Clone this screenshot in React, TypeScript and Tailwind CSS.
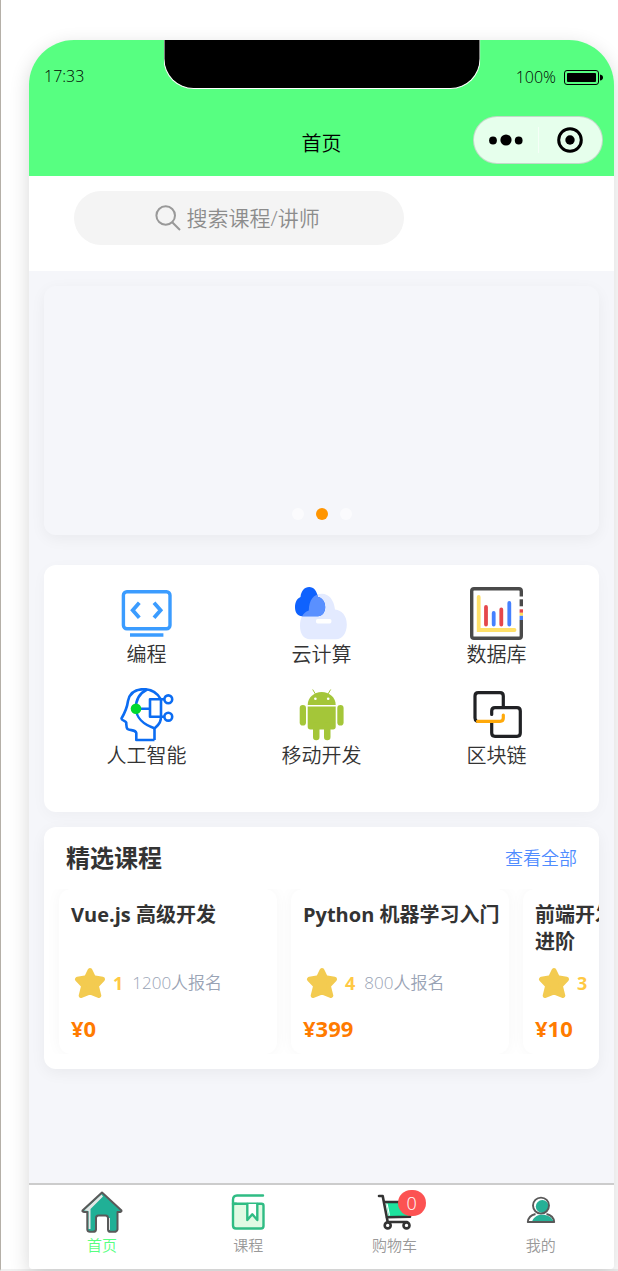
import type { ReactNode } from 'react'

const categories = [
  { label: '编程', icon: <CodeIcon /> },
  { label: '云计算', icon: <CloudIcon /> },
  { label: '数据库', icon: <DatabaseIcon /> },
  { label: '人工智能', icon: <BrainIcon /> },
  { label: '移动开发', icon: <AndroidIcon /> },
  { label: '区块链', icon: <ChainIcon /> },
]

const courses = [
  { title: 'Vue.js 高级开发', rating: 1, students: '1200人报名', price: 0 },
  { title: 'Python 机器学习入门', rating: 4, students: '800人报名', price: 399 },
  { title: '前端开发\n进阶', rating: 3, students: '', price: 10 },
]

const tabs = [
  { label: '首页', icon: <HomeIcon />, active: true, badge: null },
  { label: '课程', icon: <BookIcon />, active: false, badge: null },
  { label: '购物车', icon: <CartIcon />, active: false, badge: 0 },
  { label: '我的', icon: <UserIcon />, active: false, badge: null },
]

function CategorySvg({ children }: { children: ReactNode }) {
  return (
    <svg viewBox="0 0 54 54" className="w-[54px] h-[54px]" fill="none" aria-hidden="true">
      {children}
    </svg>
  )
}

function TabSvg({ children }: { children: ReactNode }) {
  return (
    <svg viewBox="0 0 42 42" className="w-[42px] h-[42px]" fill="none" aria-hidden="true">
      {children}
    </svg>
  )
}

function CodeIcon() {
  return (
    <CategorySvg>
      <g stroke="#3b9cff" strokeWidth="3.4">
        <rect x="3.4" y="4.7" width="46.6" height="37" rx="3.5" />
        <path d="M19.3 15.800l-6.6 7.500 6.6 7.500M34 15.800l6.6 7.500-6.6 7.500" strokeWidth="3.8" />
        <path d="M10 48h33.4" />
      </g>
    </CategorySvg>
  )
}

function CloudIcon() {
  const small =
    'M7 29.2C2.800 29.2 0 25.500 0 20.500C0 15 2 11.500 5.500 10C6 4 9.500 0 14.200 0S22 4 22.800 10C27 10.500 30.200 14.500 30.200 20C30.200 25.500 27 29.200 23 29.200Z'
  const big =
    'M15 52.300C9 52.300 5 47 5 39C5 31 8 25.500 13.800 23.500C14 13 18.500 6.700 27 6.700C34 6.700 39 13 40 22.600C47 23.500 51.800 29 51.800 37.500C51.800 46.500 47 52.300 41 52.300Z'
  return (
    <CategorySvg>
      <clipPath id="cloud-small">
        <path d={small} />
      </clipPath>
      <path d={big} fill="#e3eaff" />
      <path d={small} fill="#0f62fe" />
      <path d={big} fill="#5a90ff" clipPath="url(#cloud-small)" />
      <rect x="21" y="32" width="15.400" height="4.400" rx="1.600" fill="#fff" />
    </CategorySvg>
  )
}

function DatabaseIcon() {
  return (
    <CategorySvg>
      <path d="M51.300 9.500V4Q51.300 1.700 49 1.700H4Q1.700 1.700 1.700 4V49Q1.700 51.300 4 51.300H49Q51.300 51.300 51.300 49V33" stroke="#4a4a4a" strokeWidth="3.400" />
      <path d="M51.300 12.300v7" stroke="#4a4a4a" strokeWidth="3.400" />
      <path d="M51.300 22.300v3.500" stroke="#e5474b" strokeWidth="3.400" />
      <path d="M51.300 25.800v3" stroke="#ffdf5e" strokeWidth="3.400" />
      <path d="M51.300 28.800v4.200" stroke="#4581ff" strokeWidth="3.400" />
      <g strokeWidth="3.800" strokeLinecap="round">
        <path d="M8.700 10v33H44.500" stroke="#ffe069" />
        <path d="M16 20v17.500M31.300 22.500v15" stroke="#e5474b" />
        <path d="M23.700 26v11.500M39.300 16v21.500" stroke="#4581ff" />
      </g>
    </CategorySvg>
  )
}

function BrainIcon() {
  return (
    <CategorySvg>
      <g stroke="#0b6cf2" strokeWidth="2.600" strokeLinejoin="round">
        <path d="M34.500 52V40.500C40 36 41 33 41 28V11.500C37 4 31 1.200 23.500 1.200C14 1.200 9.500 6 8 13C7.200 19 5 24.500 1.500 30.500C1.300 32.500 5.500 32.500 6.200 34.500C6.500 37 6 39 7.500 41C10 43 15.500 41 16.300 45V52H34.500" />
        <path d="M27 1.500C19 5.500 15.800 12 15.800 20.500C16.500 30 22 36 35 40.500" />
        <path d="M16 20.700H30M44.300 11.300H30V28.700H44.300" />
        <circle cx="48.300" cy="11.300" r="3.900" />
        <circle cx="48.300" cy="28.700" r="3.900" />
      </g>
      <circle cx="16" cy="20.700" r="5.300" fill="#00d92f" />
    </CategorySvg>
  )
}

function AndroidIcon() {
  return (
    <CategorySvg>
      <g fill="#a4c639">
        <path d="M12.700 17C12.700 9.500 19 4 26.700 4S40.700 9.500 40.700 17Z" />
        <path d="M12.700 18.500h28v20.300q0 2.700-2.700 2.700H15.400q-2.700 0-2.700-2.700Z" />
        <rect x="4.700" y="17" width="6.300" height="20.500" rx="3.100" />
        <rect x="42.300" y="17" width="6.300" height="20.500" rx="3.100" />
        <rect x="18" y="34" width="6.500" height="18.300" rx="3.200" />
        <rect x="29" y="34" width="6.500" height="18.300" rx="3.200" />
      </g>
      <path d="M17.700 1.500l3 5M35.700 1.500l-3 5" stroke="#a4c639" />
      <circle cx="20.400" cy="10.700" r="1.300" fill="#fff" />
      <circle cx="33.200" cy="10.700" r="1.300" fill="#fff" />
    </CategorySvg>
  )
}

function ChainIcon() {
  return (
    <CategorySvg>
      <g stroke="#202124" strokeWidth="3.200" strokeLinecap="round">
        <path d="M33.300 18.500V8Q33.300 4.700 30 4.700H8.300Q5 4.700 5 8V30Q5 32 6.500 33" />
        <path d="M21.700 26.500V23Q21.700 19.700 25 19.700H47Q50.300 19.700 50.300 23V45Q50.300 48.300 47 48.300H25Q21.700 48.300 21.700 45V35" />
      </g>
      <path d="M7.500 33.300H30Q33.300 33.300 33.300 30V27" stroke="#ffa90a" strokeWidth="3.200" strokeLinecap="round" />
    </CategorySvg>
  )
}

function HomeIcon() {
  return (
    <TabSvg>
      <path d="M21 2.500L40.500 19.500Q41 21.500 36.500 21V38.500Q36 40.800 33 40.800H29.500Q27.300 40.800 27 38.500V27Q27 24.500 24.500 24.500H17.500Q15 24.500 15 27V38.500Q14.700 40.800 12 40.800H9Q6.500 40.800 6.300 38.500V21Q.700 21.500 1.500 19.500Z" fill="#20b096" />
      <path d="M3 19.500L20.500 3.500L22 5.500L9.500 18V38H7.500V20Z" fill="#e4e7e6" />
      <path d="M28.500 27v12" stroke="#e4e7e6" />
      <path d="M21 1.500L40.500 19.500Q41 21.500 36.500 21V38.500Q36 40.800 33 40.800H29.500Q27.300 40.800 27 38.500V27Q27 24.500 24.500 24.500H17.500Q15 24.500 15 27V38.500Q14.700 40.800 12 40.800H9Q6.500 40.800 6.300 38.500V21Q.700 21.500 1.500 19.500Z" stroke="#595959" strokeWidth="2" strokeLinejoin="round" />
    </TabSvg>
  )
}

function BookIcon() {
  return (
    <TabSvg>
      <g stroke="#2fbc84" strokeWidth="2.400" strokeLinecap="round" strokeLinejoin="round">
        <path d="M6 12.700H34.500Q36.500 12.700 36.500 14.700V35Q36.500 37.500 34 37.500H9Q6 37.500 6 34.500Z" fill="#e0fae3" />
        <path d="M36 4.500H10Q6 4.500 6 9V13Q7 12.700 9 12.700" />
        <path d="M20.300 13V29L25.300 23.300L30.300 29V13" fill="#fff" />
      </g>
    </TabSvg>
  )
}

function CartIcon() {
  return (
    <TabSvg>
      <path d="M12 11H35.500V25.500H14.500Z" fill="#1de29d" />
      <path d="M13 12.500l2.500 12" stroke="#fff" strokeWidth="1.200" />
      <g stroke="#333" strokeWidth="2.600" strokeLinecap="round" strokeLinejoin="round">
        <path d="M5 5H8.700L13.700 31H33" />
        <path d="M10.500 11H36V25.700L13 26.200" />
        <circle cx="13.700" cy="34.400" r="3" fill="#fff" />
        <circle cx="32.500" cy="34.400" r="3" fill="#fff" />
      </g>
    </TabSvg>
  )
}

function UserIcon() {
  return (
    <TabSvg>
      <circle cx="22.300" cy="15.500" r="6.500" fill="#26b096" />
      <path d="M12 30.500C14 25.500 18 23.800 22 23.800C28 23.800 31.500 26 33.500 30.500Z" fill="#26b096" />
      <g stroke="#595959" strokeWidth="1.900" strokeLinejoin="round">
        <circle cx="21" cy="14.600" r="8" />
        <path d="M15.500 23Q8.500 24.500 7.800 31H34.200Q33.500 24.500 26.500 23" />
      </g>
    </TabSvg>
  )
}

function StarIcon() {
  return (
    <svg viewBox="0 0 32 32" className="w-8 h-8" aria-hidden="true">
      <path
        d="M16 3.500L19.500 10.800L28.500 12.200L22.300 18.700L24.800 28.500L16 25L7.200 28.500L9.700 18.700L3.500 12.200L12.500 10.800Z"
        fill="#f3cb50"
        stroke="#f3cb50"
        strokeWidth="5"
        strokeLinejoin="round"
      />
    </svg>
  )
}

function Header() {
  return (
    <header className="relative bg-[#57ff81] rounded-t-[45px] text-black">
      <div className="absolute top-0 left-1/2 -translate-x-1/2 w-[317px] h-[49px] bg-black border border-t-0 border-white rounded-b-[30px]" />
      <div className="h-[72px] pl-[15px] pr-[11px] flex items-center justify-between text-base">
        <span>17:33</span>
        <div className="flex items-center gap-2 pt-[2px]">
          <span>100%</span>
          <svg width="39" height="15" viewBox="0 0 39 15" aria-hidden="true">
            <rect x=".5" y=".5" width="34" height="14" rx="2.500" fill="none" stroke="#000" />
            <rect x="3" y="3" width="29" height="9" rx="1" />
            <path d="M36 4.500q3 .5 3 3t-3 3Z" />
          </svg>
        </div>
      </div>
      <div className="h-16 px-[11px] grid grid-cols-[1fr_auto_1fr] items-center">
        <h1 className="col-start-2 text-xl">首页</h1>
        <div className="self-start justify-self-end mt-1 w-[130px] h-12 flex items-center rounded-full border border-black/15 bg-white/85">
          <button type="button" aria-label="更多" className="flex-1 flex justify-center">
            <svg width="34" height="12" viewBox="0 0 34 12">
              <circle cx="4" cy="6.500" r="3.900" />
              <circle cx="17" cy="6" r="5.600" />
              <circle cx="29.700" cy="6.500" r="3.900" />
            </svg>
          </button>
          <span className="w-px h-[26px] bg-white/60" />
          <button type="button" aria-label="关闭" className="flex-1 flex justify-center">
            <svg width="26" height="26" viewBox="0 0 26 26">
              <circle cx="13" cy="13" r="11.300" fill="none" stroke="#000" strokeWidth="3" />
              <circle cx="13" cy="13" r="4.700" />
            </svg>
          </button>
        </div>
      </div>
    </header>
  )
}

function SearchBar() {
  return (
    <div className="bg-white pt-[15px] pb-[26px] pl-[45px] pr-[210px]">
      <label className="h-[54px] flex items-center justify-center gap-[6px] rounded-full bg-[#f4f4f4] text-[#999]">
        <svg width="26" height="26" viewBox="0 0 26 26" fill="none" stroke="currentColor" strokeWidth="2" aria-hidden="true">
          <circle cx="10.700" cy="10.500" r="9.300" />
          <path d="M17.200 17.200L25 25" />
        </svg>
        <input
          type="text"
          aria-label="搜索课程/讲师"
          placeholder="搜索课程/讲师"
          className="w-[137px] text-[21px] leading-[30px] bg-transparent outline-none placeholder:text-[#8c8c8c]"
        />
      </label>
    </div>
  )
}

function Banner() {
  return (
    <section className="h-[249px] rounded-xl shadow-[0_4px_15px_rgba(0,0,0,0.05)] flex items-end justify-center gap-3 pb-[15px]">
      <span className="size-3 rounded-full bg-white/60" />
      <span className="size-3 rounded-full bg-[#ff9500]" />
      <span className="size-3 rounded-full bg-white/60" />
    </section>
  )
}

function Categories() {
  return (
    <nav className="mt-[30px] px-[15px] pt-[22px] pb-[42px] grid grid-cols-3 gap-y-[19px] bg-white rounded-xl shadow-[0_4px_15px_rgba(0,0,0,0.03)]">
      {categories.map((c) => (
        <a key={c.label} href="#" className="flex flex-col items-center text-xl leading-7 text-[#333]">
          {c.icon}
          {c.label}
        </a>
      ))}
    </nav>
  )
}

function Courses() {
  return (
    <section className="mt-[15px] pb-[15px] bg-white rounded-xl shadow-[0_4px_15px_rgba(0,0,0,0.05)] overflow-hidden">
      <div className="h-[62px] px-[22px] flex items-center justify-between">
        <h2 className="text-2xl font-bold text-[#333]">精选课程</h2>
        <a href="#" className="text-lg text-[#4f8cff]">查看全部</a>
      </div>
      <div className="flex gap-[14px] px-[15px] overflow-hidden">
        {courses.map((c) => (
          <article
            key={c.title}
            className="shrink-0 w-[218px] pl-3 pr-1 pt-3 pb-[10px] rounded-xl bg-white shadow-[0_0_15px_rgba(0,0,0,0.04)]"
          >
            <h3 className="h-[54px] text-xl leading-[27px] font-bold text-[#333] whitespace-pre-line">{c.title}</h3>
            <div className="mt-3 h-8 pl-[3px] flex items-center text-[17px]">
              <StarIcon />
              <span className="ml-[7px] text-lg font-bold text-[#ffc944]">{c.rating}</span>
              <span className="ml-[9px] text-[#99a3b5]">{c.students}</span>
            </div>
            <p className="mt-[13px] text-[22px] leading-8 font-bold text-[#ff7b00]">¥{c.price}</p>
          </article>
        ))}
      </div>
    </section>
  )
}

function TabBar() {
  return (
    <nav className="h-[86px] pt-[6px] grid grid-cols-4 bg-white border-t-2 border-[#ccc] rounded-b-sm">
      {tabs.map((t) => (
        <a
          key={t.label}
          href="#"
          className={`flex flex-col items-center text-[15px] leading-6 ${t.active ? 'text-[#57ff81]' : 'text-[#999]'}`}
        >
          <span className="relative">
            {t.icon}
            {t.badge !== null && (
              <span className="absolute -top-px -right-[10px] w-7 h-[26px] rounded-full bg-[#fc5252] text-white text-lg leading-[26px] text-center">
                {t.badge}
              </span>
            )}
          </span>
          {t.label}
        </a>
      ))}
    </nav>
  )
}

export default function App() {
  return (
    <div className="min-h-screen flex flex-col bg-white border-l border-[#b5b0a8] pt-10 pl-7 pr-1 border-b-2 border-b-[#f0f0f0] font-[350] font-['Open_Sans','Noto_Sans_CJK_SC',sans-serif]">
      <div className="flex-1 flex flex-col rounded-t-[45px] rounded-b-sm bg-[#f5f6fa] shadow-[0_6px_20px_rgba(0,0,0,0.16)]">
        <Header />
        <SearchBar />
        <main className="flex-1 p-[15px]">
          <Banner />
          <Categories />
          <Courses />
        </main>
        <TabBar />
      </div>
    </div>
  )
}
